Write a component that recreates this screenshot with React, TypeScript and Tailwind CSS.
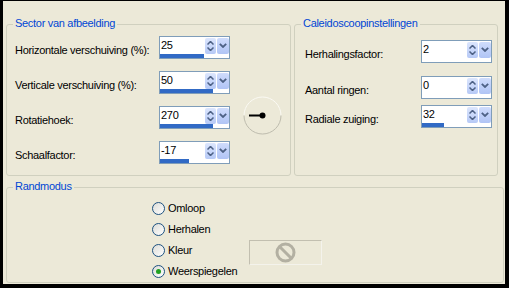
import React from 'react';

const FONT = "font-['Liberation_Sans',Arial,sans-serif] text-[11px] tracking-[-0.3px] text-black";

function SpinButtons() {
  return (
    <div className="flex h-[16px] gap-[1px]">
      <div className="w-[11px] h-full rounded-[2px] bg-gradient-to-b from-[#DCE6FD] to-[#B6C9F6] flex flex-col items-center justify-center gap-[2px]">
        <svg width="7" height="4" viewBox="0 0 7 4">
          <path d="M0.5 3.5 L3.5 0.5 L6.5 3.5" fill="none" stroke="#4D6185" strokeWidth="1.5" />
        </svg>
        <svg width="7" height="4" viewBox="0 0 7 4">
          <path d="M0.5 0.5 L3.5 3.5 L6.5 0.5" fill="none" stroke="#4D6185" strokeWidth="1.5" />
        </svg>
      </div>
      <div className="w-[12px] h-full rounded-[2px] bg-gradient-to-b from-[#CFDCFC] to-[#B0C4F5] flex items-center justify-center">
        <svg width="8" height="5" viewBox="0 0 8 5">
          <path d="M0.8 0.8 L4 4 L7.2 0.8" fill="none" stroke="#4D6185" strokeWidth="1.8" />
        </svg>
      </div>
    </div>
  );
}

function SpinBox({ value, bar }: { value: string; bar: number }) {
  return (
    <div className="w-[71px] h-[23px] border border-[#7F9DB9] bg-white flex flex-col">
      <div className="h-[17px] flex items-center pr-[0px]">
        <span className="flex-1 pl-[1px] leading-[13px]">{value}</span>
        <SpinButtons />
      </div>
      <div className="h-[4px]">
        <div className="h-full bg-[#316AC5]" style={{ width: bar }} />
      </div>
    </div>
  );
}

function Group({ title, className, children }: { title: string; className: string; children: React.ReactNode }) {
  return (
    <div className={`relative border border-[#D0D0BF] rounded-[3px] ${className}`}>
      <span className="absolute left-[6px] top-[-8px] px-[2px] bg-[#ECE9D8] leading-[13px] text-[#0046D5]">{title}</span>
      {children}
    </div>
  );
}

function Row({ label, value, bar, labelWidth }: { label: string; value: string; bar: number; labelWidth: string }) {
  return (
    <div className="flex items-center h-[23px]">
      <span className={`${labelWidth} pt-[6px] leading-[13px]`}>{label}</span>
      <SpinBox value={value} bar={bar} />
    </div>
  );
}

function Radio({ label, checked }: { label: string; checked?: boolean }) {
  return (
    <div className="flex items-center h-[21px] gap-[3px]">
      <span className="w-[13px] h-[13px] rounded-full border border-[#1C5180] bg-gradient-to-br from-[#DCDCD7] to-white flex items-center justify-center">
        {checked && <span className="w-[5px] h-[5px] rounded-full bg-[#21A121]" />}
      </span>
      <span className="leading-[13px]">{label}</span>
    </div>
  );
}

export default function App() {
  return (
    <div className={`w-[509px] h-[288px] bg-black pl-[3px] pt-[1px] ${FONT}`}>
      <div className="w-[502px] h-[283px] bg-[#ECE9D8] pl-[3px] pt-[23px] flex flex-col">
        <div className="flex gap-[3px]">
          <Group title="Sector van afbeelding" className="w-[285px] h-[152px] pl-[8px] pt-[11px] flex">
            <div className="flex flex-col gap-[12px]">
              <Row label="Horizontale verschuiving (%):" value="25" bar={44} labelWidth="w-[144px]" />
              <Row label="Verticale verschuiving (%):" value="50" bar={53} labelWidth="w-[144px]" />
              <Row label="Rotatiehoek:" value="270" bar={53} labelWidth="w-[144px]" />
              <Row label="Schaalfactor:" value="-17" bar={29} labelWidth="w-[144px]" />
            </div>
            <div className="ml-[13px] mt-[60px]">
              <svg width="39" height="39" viewBox="0 0 39 39">
                <path d="M1 19.5 A18.5 18.5 0 0 1 38 19.5" fill="none" stroke="#FBFAF4" strokeWidth="1" />
                <path d="M1 19.5 A18.5 18.5 0 0 0 38 19.5" fill="none" stroke="#BEBCAE" strokeWidth="1" />
                <line x1="6" y1="19.5" x2="19.5" y2="19.5" stroke="#000" strokeWidth="2" />
                <circle cx="19.5" cy="19.5" r="3" fill="#000" />
              </svg>
            </div>
          </Group>
          <Group title="Caleidoscoopinstellingen" className="w-[204px] h-[152px] pl-[10px] pt-[15px]">
            <div className="flex flex-col">
              <Row label="Herhalingsfactor:" value="2" bar={0} labelWidth="w-[116px]" />
              <div className="mt-[13px]">
                <Row label="Aantal ringen:" value="0" bar={0} labelWidth="w-[116px]" />
              </div>
              <div className="mt-[6px]">
                <Row label="Radiale zuiging:" value="32" bar={22} labelWidth="w-[116px]" />
              </div>
            </div>
          </Group>
        </div>
        <Group title="Randmodus" className="mt-[11px] w-[498px] h-[96px] pl-[145px] pt-[10px] flex">
          <div className="w-[97px] flex flex-col">
            <Radio label="Omloop" />
            <Radio label="Herhalen" />
            <Radio label="Kleur" />
            <Radio label="Weerspiegelen" checked />
          </div>
          <div className="mt-[42px] w-[73px] h-[25px] border border-[#C2BFB0] border-b-[#F4F3EC] border-r-[#F4F3EC] flex items-center justify-center">
            <svg width="21" height="21" viewBox="0 0 21 21">
              <circle cx="10.5" cy="10.5" r="8.5" fill="none" stroke="#B3B0A2" strokeWidth="3" />
              <line x1="4.5" y1="4.5" x2="16.5" y2="16.5" stroke="#B3B0A2" strokeWidth="3" />
            </svg>
          </div>
        </Group>
      </div>
    </div>
  );
}
